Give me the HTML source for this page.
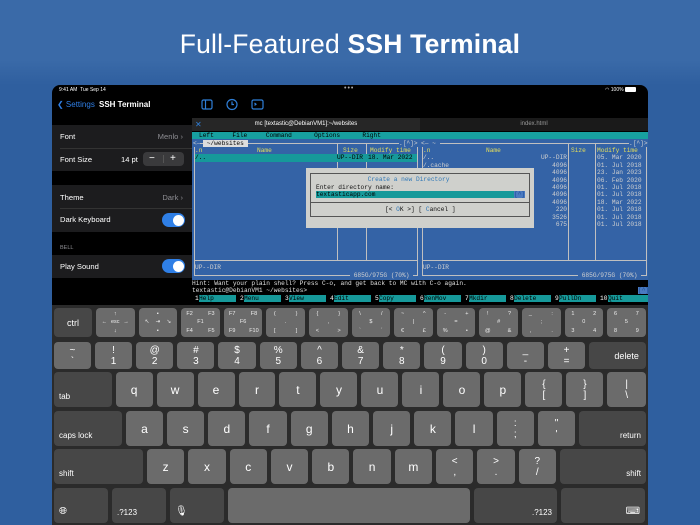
<!DOCTYPE html>
<html><head><meta charset="utf-8">
<style>
*{margin:0;padding:0;box-sizing:border-box}
body{width:700px;height:525px;overflow:hidden;background:linear-gradient(#3a6aa8 0,#3a6aa8 60px,#2f5f9f 85px);font-family:"Liberation Sans",sans-serif;position:relative}
.a{position:absolute}
h1{position:absolute;top:29px;left:0;width:700px;text-align:center;color:#fff;font-weight:400;font-size:26.5px;letter-spacing:.2px}
h1 b{font-weight:700}
.dev{position:absolute;left:52px;top:85px;width:596px;height:440px;background:#000;border-radius:8px 8px 0 0;overflow:hidden}
.t{position:absolute;font-family:"Liberation Mono",monospace;font-size:6.2px;line-height:7.4px;white-space:pre;color:#d0d0d0}
.y{color:#e6df5a}
.grp{position:absolute;left:0;width:140px;background:#1c1c1e}
.row{position:absolute;left:8px;color:#fff;font-size:7.6px}
.rv{position:absolute;right:9px;color:#8e8e93;font-size:7.6px}
.tog{position:absolute;left:110px;width:23px;height:14px;border-radius:7px;background:#2f7fe6}
.tog:after{content:"";position:absolute;right:1.5px;top:1.5px;width:11px;height:11px;border-radius:50%;background:#fff}
.kb{position:absolute;left:0;top:220px;width:596px;height:230px;background:#2b2b2b}
.kr{position:absolute;left:2px;right:2px;display:flex;gap:4px}
.k{background:#6b6b6b;border-radius:4px;color:#fff;font-size:12px;position:relative;display:flex;align-items:center;justify-content:center;flex-shrink:1;min-width:0}
.d{background:#474747}
.s{font-size:8px;justify-content:flex-start;align-items:flex-end;padding:0 0 6px 5px}
.sr{justify-content:flex-end;padding:0 5px 6px 0}
.two{flex-direction:column;line-height:11px;font-size:10px}
.g{display:grid;grid-template-columns:1fr 1fr 1fr;grid-template-rows:1fr 1fr 1fr;font-size:5.5px;text-align:center;align-items:center;padding:2px 3px;color:#eee}
.fk span{top:0}
</style></head><body>
<h1>Full-Featured <b>SSH Terminal</b></h1>
<div class="dev">
 <div class="a" style="left:7px;top:2px;color:#fff;font-size:5px">9:41 AM &nbsp;Tue Sep 14</div>
 <div class="a" style="left:292px;top:0px;color:#aaa;font-size:7px;letter-spacing:1px">•••</div>
 <div class="a" style="left:553px;top:2px;color:#fff;font-size:5px">◠ 100% <span style="display:inline-block;width:11px;height:5px;background:#fff;border-radius:1px;vertical-align:middle"></span></div>
 <div class="a" style="left:5px;top:15px;color:#2f7fe6;font-size:8px">❮ Settings</div>
 <div class="a" style="left:47px;top:15px;color:#fff;font-size:8px;font-weight:700">SSH Terminal</div>
 <div class="grp" style="top:40px;height:46px">
  <div class="row" style="top:7px">Font</div><div class="rv" style="top:7px">Menlo ›</div>
  <div class="a" style="left:8px;right:0;top:22.5px;height:1px;background:#333"></div>
  <div class="row" style="top:30px">Font Size</div>
  <div class="a" style="left:69px;top:30px;color:#fff;font-size:7.6px">14 pt</div>
  <div class="a" style="left:91px;top:27px;width:41px;height:14px;background:#3a3a3c;border-radius:4px;color:#fff;font-size:10px;line-height:13px"><span class="a" style="left:6px">−</span><span class="a" style="left:20px;top:3px;width:1px;height:8px;background:#555"></span><span class="a" style="left:27px">+</span></div>
 </div>
 <div class="grp" style="top:100px;height:47px">
  <div class="row" style="top:8px">Theme</div><div class="rv" style="top:8px">Dark ›</div>
  <div class="a" style="left:8px;right:0;top:23px;height:1px;background:#333"></div>
  <div class="row" style="top:30px">Dark Keyboard</div>
  <div class="tog" style="top:28px"></div>
 </div>
 <div class="a" style="left:8px;top:160px;color:#8e8e93;font-size:5.5px">BELL</div>
 <div class="grp" style="top:170px;height:23px">
  <div class="row" style="top:7px">Play Sound</div>
  <div class="tog" style="top:4px"></div>
 </div>
 <svg class="a" style="left:148px;top:13px" width="70" height="14" fill="none" stroke="#2f7fd8" stroke-width="1.2">
  <rect x="2" y="2" width="10" height="9" rx="1.5"/><line x1="5.5" y1="2" x2="5.5" y2="11"/>
  <circle cx="32" cy="6.5" r="5"/><path d="M32 3.5v3h2"/>
  <rect x="52" y="2" width="11" height="9" rx="1.5"/><path d="M54.5 5l1.5 1.2-1.5 1.2"/>
 </svg>
 <div class="a" style="left:140px;top:33px;width:228px;height:13px;background:#262626"></div>
 <div class="a" style="left:368px;top:33px;width:228px;height:13px;background:#1a1a1a"></div>
 <div class="a" style="left:143px;top:35px;color:#2f7fd8;font-size:8px">✕</div>
 <div class="a" style="left:140px;top:36px;width:228px;text-align:center;color:#fff;font-size:6px">mc [textastic@DebianVM1]:~/websites</div>
 <div class="a" style="left:368px;top:36px;width:228px;text-align:center;color:#999;font-size:6px">index.html</div>
 <div class="a" style="left:140px;top:46px;width:456px;height:174px;background:#000"></div>
 <div class="a" style="left:140px;top:46.5px;width:456px;height:7.4px;background:#17a0a0"></div>
 <div class="t" style="left:147px;top:46.5px;color:#000">Left     File     Command      Options      Right</div>
 <div class="a" style="left:140px;top:54px;width:456px;height:141px;background:#3463a6"></div>
 <div class="a" style="left:142px;top:57.5px;width:224px;height:133.5px;border:1px solid #c0c0c0"></div>
 <div class="a" style="left:142px;top:175px;width:224px;height:1px;background:#c0c0c0"></div>
 <div class="a" style="left:285px;top:58px;width:1px;height:118px;background:#c0c0c0"></div>
 <div class="a" style="left:314px;top:58px;width:1px;height:118px;background:#c0c0c0"></div>
 <div class="t" style="left:141px;top:54.5px;background:#3463a6">&lt;─</div>
 <div class="t" style="left:151px;top:54.5px;background:#ddd;color:#000"> ~/websites </div>
 <div class="t" style="left:347px;top:54.5px;background:#3463a6">.[^]&gt;</div>
 <div class="t y" style="left:143px;top:62px">.n</div>
 <div class="t y" style="left:205px;top:62px">Name</div>
 <div class="t y" style="left:291px;top:62px">Size</div>
 <div class="t y" style="left:318px;top:62px">Modify time</div>
 <div class="a" style="left:143px;top:69.3px;width:222px;height:7.4px;background:#16999a"></div>
 <div class="t" style="left:143px;top:69.3px;color:#000">/..</div>
 <div class="t" style="left:285px;top:69.3px;color:#000">UP--DIR</div>
 <div class="t" style="left:316px;top:69.3px;color:#000">18. Mar 2022</div>
 <div class="t" style="left:143px;top:179px">UP--DIR</div>
 <div class="t" style="left:298px;top:186.5px;background:#3463a6"> 685G/975G (70%) </div>
 <div class="a" style="left:370px;top:57.5px;width:225px;height:133.5px;border:1px solid #c0c0c0"></div>
 <div class="a" style="left:370px;top:175px;width:225px;height:1px;background:#c0c0c0"></div>
 <div class="a" style="left:516px;top:58px;width:1px;height:118px;background:#c0c0c0"></div>
 <div class="a" style="left:543px;top:58px;width:1px;height:118px;background:#c0c0c0"></div>
 <div class="t" style="left:369px;top:54.5px;background:#3463a6">&lt;─ ~ </div>
 <div class="t" style="left:577px;top:54.5px;background:#3463a6">.[^]&gt;</div>
 <div class="t y" style="left:371px;top:62px">.n</div>
 <div class="t y" style="left:434px;top:62px">Name</div>
 <div class="t y" style="left:519px;top:62px">Size</div>
 <div class="t y" style="left:545px;top:62px">Modify time</div>
 <div class="t" style="left:371px;top:69.3px">/..
/.cache</div>
 <div class="t" style="left:487px;top:69.3px;text-align:right;width:28px">UP--DIR
4096
4096
4096
4096
4096
4096
 220
3526
 675</div>
 <div class="t" style="left:545px;top:69.3px">05. Mar 2020
01. Jul 2018
23. Jan 2023
06. Feb 2020
01. Jul 2018
01. Jul 2018
18. Mar 2022
01. Jul 2018
01. Jul 2018
01. Jul 2018</div>
 <div class="t" style="left:371px;top:179px">UP--DIR</div>
 <div class="t" style="left:526px;top:186.5px;background:#3463a6"> 685G/975G (70%) </div>
 <div class="a" style="left:254px;top:83px;width:228px;height:60px;background:#cfd0cc"></div>
 <div class="a" style="left:258px;top:87.5px;width:220px;height:44px;border:1px solid #555"></div>
 <div class="a" style="left:258px;top:117px;width:220px;height:1px;background:#555"></div>
 <div class="t" style="left:312px;top:91px;background:#cfd0cc;color:#2f78b8"> Create a new Directory </div>
 <div class="t" style="left:264px;top:98.5px;color:#111">Enter directory name:</div>
 <div class="a" style="left:264px;top:106px;width:207px;height:7px;background:#16999a"></div>
 <div class="t" style="left:264px;top:106px;color:#000">textasticapp.com</div>
 <div class="t" style="left:462px;top:106px;color:#1b4d9a;background:#4a7ac0">[^]</div>
 <div class="t" style="left:333px;top:121px;color:#111">[&lt; <span style="color:#2f78b8">O</span>K &gt;] [ <span style="color:#2f78b8">C</span>ancel ]</div>
 <div class="t" style="left:140px;top:195px;color:#e0e0e0">Hint: Want your plain shell? Press C-o, and get back to MC with C-o again.
textastic@DebianVM1 ~/websites&gt;</div>
 <div class="t" style="left:586px;top:202px;background:#4a7ac0;color:#1b4d9a">[^]</div>
 <div class="a fk" style="left:140px;top:210px;width:456px;height:8px;font-family:'Liberation Mono',monospace;font-size:6.2px;line-height:7.4px;white-space:nowrap"><span class="a" style="left:3px;color:#fff">1</span><span class="a" style="left:7px;width:37px;background:#16999a;color:#000">Help</span><span class="a" style="left:48px;color:#fff">2</span><span class="a" style="left:52px;width:37px;background:#16999a;color:#000">Menu</span><span class="a" style="left:93px;color:#fff">3</span><span class="a" style="left:97px;width:37px;background:#16999a;color:#000">View</span><span class="a" style="left:138px;color:#fff">4</span><span class="a" style="left:142px;width:37px;background:#16999a;color:#000">Edit</span><span class="a" style="left:183px;color:#fff">5</span><span class="a" style="left:187px;width:37px;background:#16999a;color:#000">Copy</span><span class="a" style="left:228px;color:#fff">6</span><span class="a" style="left:232px;width:37px;background:#16999a;color:#000">RenMov</span><span class="a" style="left:273px;color:#fff">7</span><span class="a" style="left:277px;width:37px;background:#16999a;color:#000">Mkdir</span><span class="a" style="left:318px;color:#fff">8</span><span class="a" style="left:322px;width:37px;background:#16999a;color:#000">Delete</span><span class="a" style="left:363px;color:#fff">9</span><span class="a" style="left:367px;width:37px;background:#16999a;color:#000">PullDn</span><span class="a" style="left:408px;color:#fff">10</span><span class="a" style="left:416px;width:40px;background:#16999a;color:#000">Quit</span></div>
 <div class="kb">
  <div class="kr" style="top:3px;height:29px">
   <div class="k d" style="width:38px;font-size:9px">ctrl</div>
   <div class="k g" style="width:38.6px"><span></span><span>↑</span><span></span><span>←</span><span>esc</span><span>→</span><span></span><span>↓</span><span></span></div>
   <div class="k g" style="width:38.6px"><span></span><span>▪</span><span></span><span>↖</span><span>⇥</span><span>↘</span><span></span><span>▪</span><span></span></div>
   <div class="k g" style="width:38.6px"><span>F2</span><span></span><span>F3</span><span></span><span>F1</span><span></span><span>F4</span><span></span><span>F5</span></div>
   <div class="k g" style="width:38.6px"><span>F7</span><span></span><span>F8</span><span></span><span>F6</span><span></span><span>F9</span><span></span><span>F10</span></div>
   <div class="k g" style="width:38.6px"><span>(</span><span></span><span>)</span><span></span><span>.</span><span></span><span>[</span><span></span><span>]</span></div>
   <div class="k g" style="width:38.6px"><span>{</span><span></span><span>}</span><span></span><span>,</span><span></span><span>&lt;</span><span></span><span>&gt;</span></div>
   <div class="k g" style="width:38.6px"><span>\</span><span></span><span>/</span><span></span><span>$</span><span></span><span>`</span><span></span><span>´</span></div>
   <div class="k g" style="width:38.6px"><span>~</span><span></span><span>^</span><span></span><span>|</span><span></span><span>€</span><span></span><span>£</span></div>
   <div class="k g" style="width:38.6px"><span>-</span><span></span><span>+</span><span></span><span>=</span><span></span><span>%</span><span></span><span>•</span></div>
   <div class="k g" style="width:38.6px"><span>!</span><span></span><span>?</span><span></span><span>#</span><span></span><span>@</span><span></span><span>&amp;</span></div>
   <div class="k g" style="width:38.6px"><span>_</span><span></span><span>:</span><span></span><span>;</span><span></span><span>,</span><span></span><span>.</span></div>
   <div class="k g" style="width:38.6px"><span>1</span><span></span><span>2</span><span></span><span>0</span><span></span><span>3</span><span></span><span>4</span></div>
   <div class="k g" style="width:38.6px"><span>6</span><span></span><span>7</span><span></span><span>5</span><span></span><span>8</span><span></span><span>9</span></div>
  </div>
  <div class="kr" style="top:37px;height:27px">
   <div class="k two" style="width:37px"><span>~</span><span>`</span></div>
   <div class="k two" style="width:37.3px"><span>!</span><span>1</span></div>
   <div class="k two" style="width:37.3px"><span>@</span><span>2</span></div>
   <div class="k two" style="width:37.3px"><span>#</span><span>3</span></div>
   <div class="k two" style="width:37.3px"><span>$</span><span>4</span></div>
   <div class="k two" style="width:37.3px"><span>%</span><span>5</span></div>
   <div class="k two" style="width:37.3px"><span>^</span><span>6</span></div>
   <div class="k two" style="width:37.3px"><span>&amp;</span><span>7</span></div>
   <div class="k two" style="width:37.3px"><span>*</span><span>8</span></div>
   <div class="k two" style="width:37.3px"><span>(</span><span>9</span></div>
   <div class="k two" style="width:37.3px"><span>)</span><span>0</span></div>
   <div class="k two" style="width:37.3px"><span>_</span><span>-</span></div>
   <div class="k two" style="width:37.3px"><span>+</span><span>=</span></div>
   <div class="k d" style="width:57px;font-size:9px;padding-left:18px">delete</div>
  </div>
  <div class="kr" style="top:67px;height:35px">
   <div class="k d s" style="width:58px">tab</div>
   <div class="k" style="width:37.3px">q</div><div class="k" style="width:37.3px">w</div><div class="k" style="width:37.3px">e</div><div class="k" style="width:37.3px">r</div><div class="k" style="width:37.3px">t</div><div class="k" style="width:37.3px">y</div><div class="k" style="width:37.3px">u</div><div class="k" style="width:37.3px">i</div><div class="k" style="width:37.3px">o</div><div class="k" style="width:37.3px">p</div>
   <div class="k two" style="width:37.3px"><span>{</span><span>[</span></div>
   <div class="k two" style="width:37.3px"><span>}</span><span>]</span></div>
   <div class="k two" style="width:39px"><span>|</span><span>\</span></div>
  </div>
  <div class="kr" style="top:106px;height:35px">
   <div class="k d s" style="width:68px">caps lock</div>
   <div class="k" style="width:37.3px">a</div><div class="k" style="width:37.3px">s</div><div class="k" style="width:37.3px">d</div><div class="k" style="width:37.3px">f</div><div class="k" style="width:37.3px">g</div><div class="k" style="width:37.3px">h</div><div class="k" style="width:37.3px">j</div><div class="k" style="width:37.3px">k</div><div class="k" style="width:37.3px">l</div>
   <div class="k two" style="width:37.3px"><span>:</span><span>;</span></div>
   <div class="k two" style="width:37.3px"><span>"</span><span>'</span></div>
   <div class="k d s sr" style="width:67px">return</div>
  </div>
  <div class="kr" style="top:144px;height:35px">
   <div class="k d s" style="width:89px">shift</div>
   <div class="k" style="width:37.3px">z</div><div class="k" style="width:37.3px">x</div><div class="k" style="width:37.3px">c</div><div class="k" style="width:37.3px">v</div><div class="k" style="width:37.3px">b</div><div class="k" style="width:37.3px">n</div><div class="k" style="width:37.3px">m</div>
   <div class="k two" style="width:37.3px"><span>&lt;</span><span>,</span></div>
   <div class="k two" style="width:37.3px"><span>&gt;</span><span>.</span></div>
   <div class="k two" style="width:37.3px"><span>?</span><span>/</span></div>
   <div class="k d s sr" style="width:86px">shift</div>
  </div>
  <div class="kr" style="top:183px;height:35px">
   <div class="k d s" style="width:54px;font-size:10px">🌐︎</div>
   <div class="k d s" style="width:54px">.?123</div>
   <div class="k d s" style="width:54px;font-size:10px">🎙︎</div>
   <div class="k" style="width:242px"></div>
   <div class="k d s sr" style="width:83px">.?123</div>
   <div class="k d s sr" style="width:84px;font-size:10px">⌨︎</div>
  </div>
 </div>
</div>
</body></html>
